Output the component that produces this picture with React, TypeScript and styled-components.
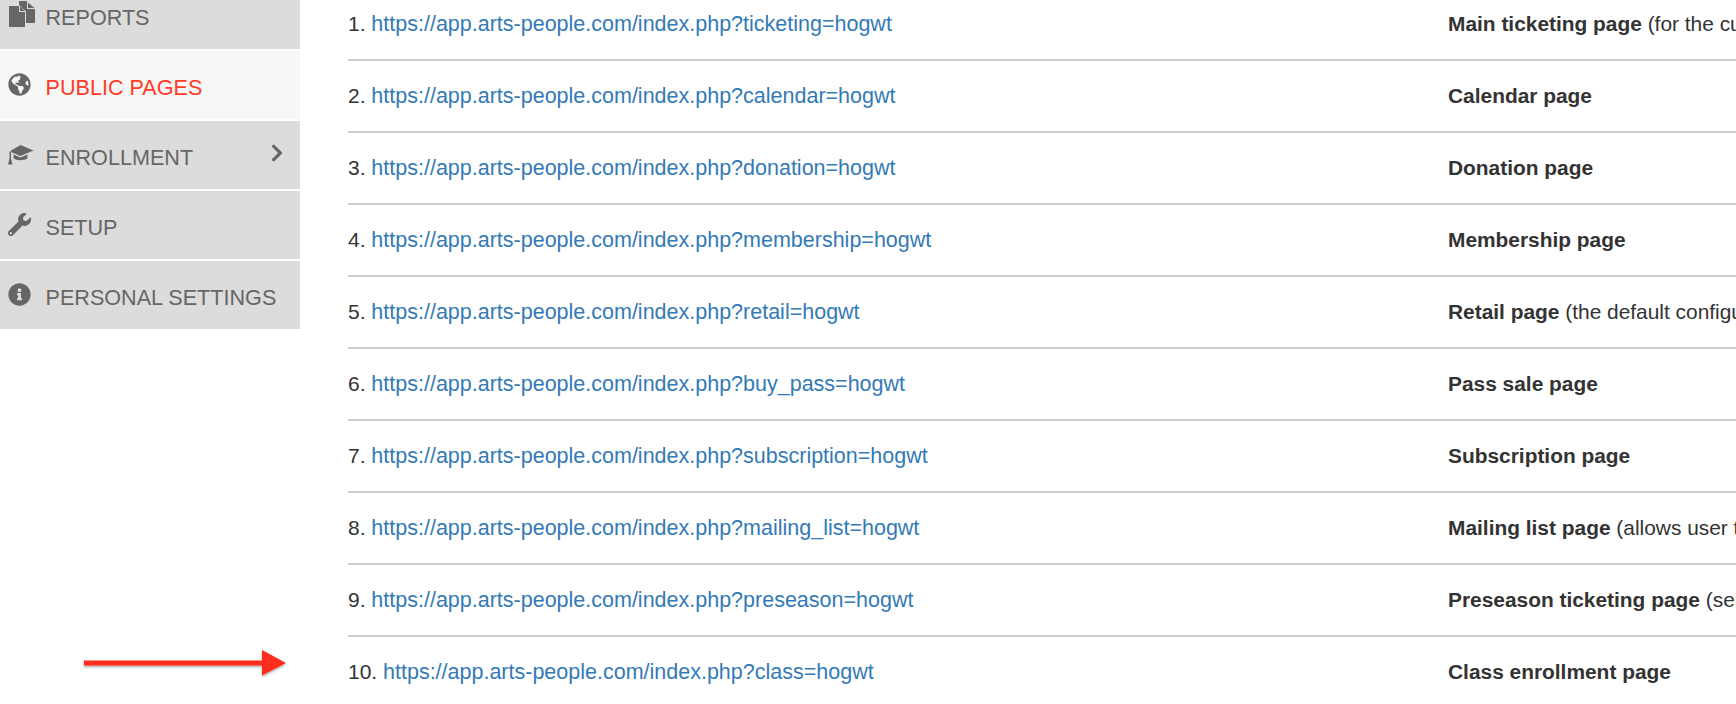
import * as React from "react";
import styled, { createGlobalStyle } from "styled-components";
import { FaChevronRight, FaGlobeAmericas, FaInfoCircle, FaWrench } from "react-icons/fa";

const GlobalStyle = createGlobalStyle`
  html, body {
    margin: 0;
    padding: 0;
    background: #fff;
    overflow: hidden;
  }
  body {
    font-family: "Liberation Sans", Arial, sans-serif;
  }
`;

const Page = styled.div`
  display: flex;
  width: 1736px;
  height: 704px;
  overflow: hidden;
  position: relative;
`;

const Sidebar = styled.nav`
  flex: 0 0 300px;
  margin-top: -19px;
  display: flex;
  flex-direction: column;
  gap: 2px;
`;

const MenuItem = styled.div<{ $active?: boolean }>`
  height: 68px;
  display: flex;
  align-items: center;
  padding: 0 13px 0 8px;
  background: ${props => (props.$active ? "#f7f7f7" : "#dcdcdc")};
  color: ${props => (props.$active ? "#ff3b26" : "#666")};
  font-size: 21.6px;
  white-space: nowrap;
`;

const MenuIcon = styled.span`
  flex: 0 0 37.5px;
  display: flex;
  align-items: center;
  margin-top: -2px;
  font-size: 23px;
  color: #666;
`;

const MenuLabel = styled.span`
  margin-top: 5px;
`;

const MenuChevron = styled.span`
  margin-left: auto;
  margin-top: -5px;
  display: flex;
  font-size: 20px;
  color: #666;
  stroke: #666;
  stroke-width: 40px;
`;

const Content = styled.main`
  flex: 1;
  margin-top: -11px;
  padding-left: 48px;
  min-width: 0;
`;

const LinkRow = styled.div`
  height: 70px;
  display: flex;
  align-items: center;
  border-bottom: 2px solid #ccc;
  font-size: 20.9px;
  color: #333;
  white-space: nowrap;
  overflow: hidden;
  &:last-child {
    border-bottom: none;
  }
`;

const UrlCell = styled.div`
  flex: 0 0 1100px;
  font-size: 21px;
`;

const PageLink = styled.a`
  color: #337ab7;
  font-size: 21.5px;
  text-decoration: none;
`;

const Arrow = styled.svg`
  position: absolute;
  left: 80px;
  top: 646px;
`;

const ReportsIcon = () => (
  <svg width="27" height="27" viewBox="0 0 27 27" fill="currentColor">
    <path d="M1 5h10v6h6v15H1z" />
    <path d="M12 5l4.500 5H12z" />
    <path d="M11 0h8v8h8v14h-9V10.500L11 4z" />
    <path d="M20 1.500L26.500 7H20z" />
  </svg>
);

const CapIcon = () => (
  <svg width="26" height="21" viewBox="0 0 26 21" fill="currentColor">
    <path d="M12.500 1L25.500 6.500L12.500 12L3 8V6.500z" />
    <path d="M5.500 10.500L12.500 13.500L19.500 10.500V14C17.500 17 7.500 17 5.500 14z" />
    <path d="M1.500 7.500H3V14.500L4.500 20.500H0L1.500 14.500z" />
  </svg>
);

const items = [
  { label: "REPORTS", icon: <ReportsIcon /> },
  { label: "PUBLIC PAGES", icon: <FaGlobeAmericas />, active: true },
  { label: "ENROLLMENT", icon: <CapIcon />, chevron: true },
  { label: "SETUP", icon: <FaWrench /> },
  { label: "PERSONAL SETTINGS", icon: <FaInfoCircle /> },
];

const links: [string, string, string?][] = [
  ["ticketing", "Main ticketing page", " (for the cu"],
  ["calendar", "Calendar page"],
  ["donation", "Donation page"],
  ["membership", "Membership page"],
  ["retail", "Retail page", " (the default configu"],
  ["buy_pass", "Pass sale page"],
  ["subscription", "Subscription page"],
  ["mailing_list", "Mailing list page", " (allows user t"],
  ["preseason", "Preseason ticketing page", " (sel"],
  ["class", "Class enrollment page"],
];

export default function App() {
  return (
    <Page>
      <GlobalStyle />
      <Sidebar>
        {items.map(item => (
          <MenuItem key={item.label} $active={item.active}>
            <MenuIcon>{item.icon}</MenuIcon>
            <MenuLabel>{item.label}</MenuLabel>
            {item.chevron && (
              <MenuChevron>
                <FaChevronRight />
              </MenuChevron>
            )}
          </MenuItem>
        ))}
      </Sidebar>
      <Content>
        {links.map(([key, title, note], i) => (
          <LinkRow key={key}>
            <UrlCell>
              {i + 1}. <PageLink href="#">{`https://app.arts-people.com/index.php?${key}=hogwt`}</PageLink>
            </UrlCell>
            <div>
              <b>{title}</b>
              {note}
            </div>
          </LinkRow>
        ))}
      </Content>
      <Arrow width="212" height="36" viewBox="0 0 212 36">
        <defs>
          <filter id="arrowShadow" x="-5%" y="-30%" width="110%" height="170%">
            <feDropShadow dx="0" dy="1.5" stdDeviation="1.2" floodColor="#000" floodOpacity="0.35" />
          </filter>
        </defs>
        <path d="M4 14.500H182V4L206 17L182 29.500V19.500H4z" fill="#ff2d1f" filter="url(#arrowShadow)" />
      </Arrow>
    </Page>
  );
}
